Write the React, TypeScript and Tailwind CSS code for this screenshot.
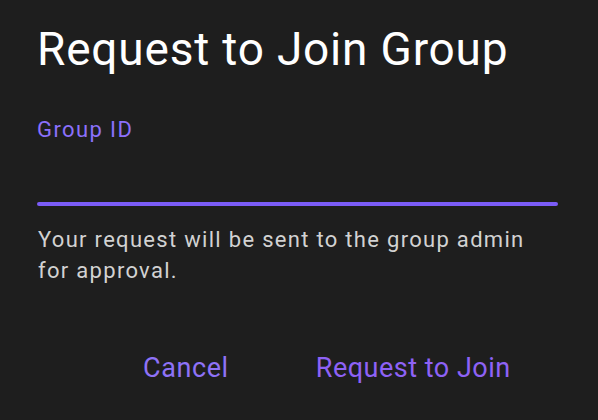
export default function App() {
  return (
    <div
      className="w-[598px] h-[420px] bg-[#1e1e1e] overflow-hidden px-[37px] pt-[21px]"
      style={{ fontFamily: 'Roboto, "Liberation Sans", sans-serif' }}
    >
      {/* Title */}
      <h1 className="text-[46px] leading-[56px] text-white tracking-[0.8px]">Request to Join Group</h1>

      {/* Group ID field */}
      <div className="mt-[40px]">
        <label className="block text-[22px] leading-[26px] text-[#8b70fb] tracking-[1.4px]">Group ID</label>
        <div className="h-[59px]" />
        <div className="h-[4px] w-[521px] bg-[#7b5cf7] rounded-full" />
      </div>

      {/* Helper text */}
      <p className="mt-[18px] text-[22px] leading-[31px] text-[#d2d2d2] tracking-[1.3px] pl-[1px]">
        Your request will be sent to the group admin
        <br />
        for approval.
      </p>

      {/* Actions */}
      <div className="mt-[66px] flex items-center">
        <button className="ml-[106px] text-[27px] leading-[32px] text-[#8e72f7] tracking-[0.6px]">Cancel</button>
        <button className="ml-[87px] text-[27px] leading-[32px] text-[#8e62f6] tracking-[0.5px]">Request to Join</button>
      </div>
    </div>
  );
}
